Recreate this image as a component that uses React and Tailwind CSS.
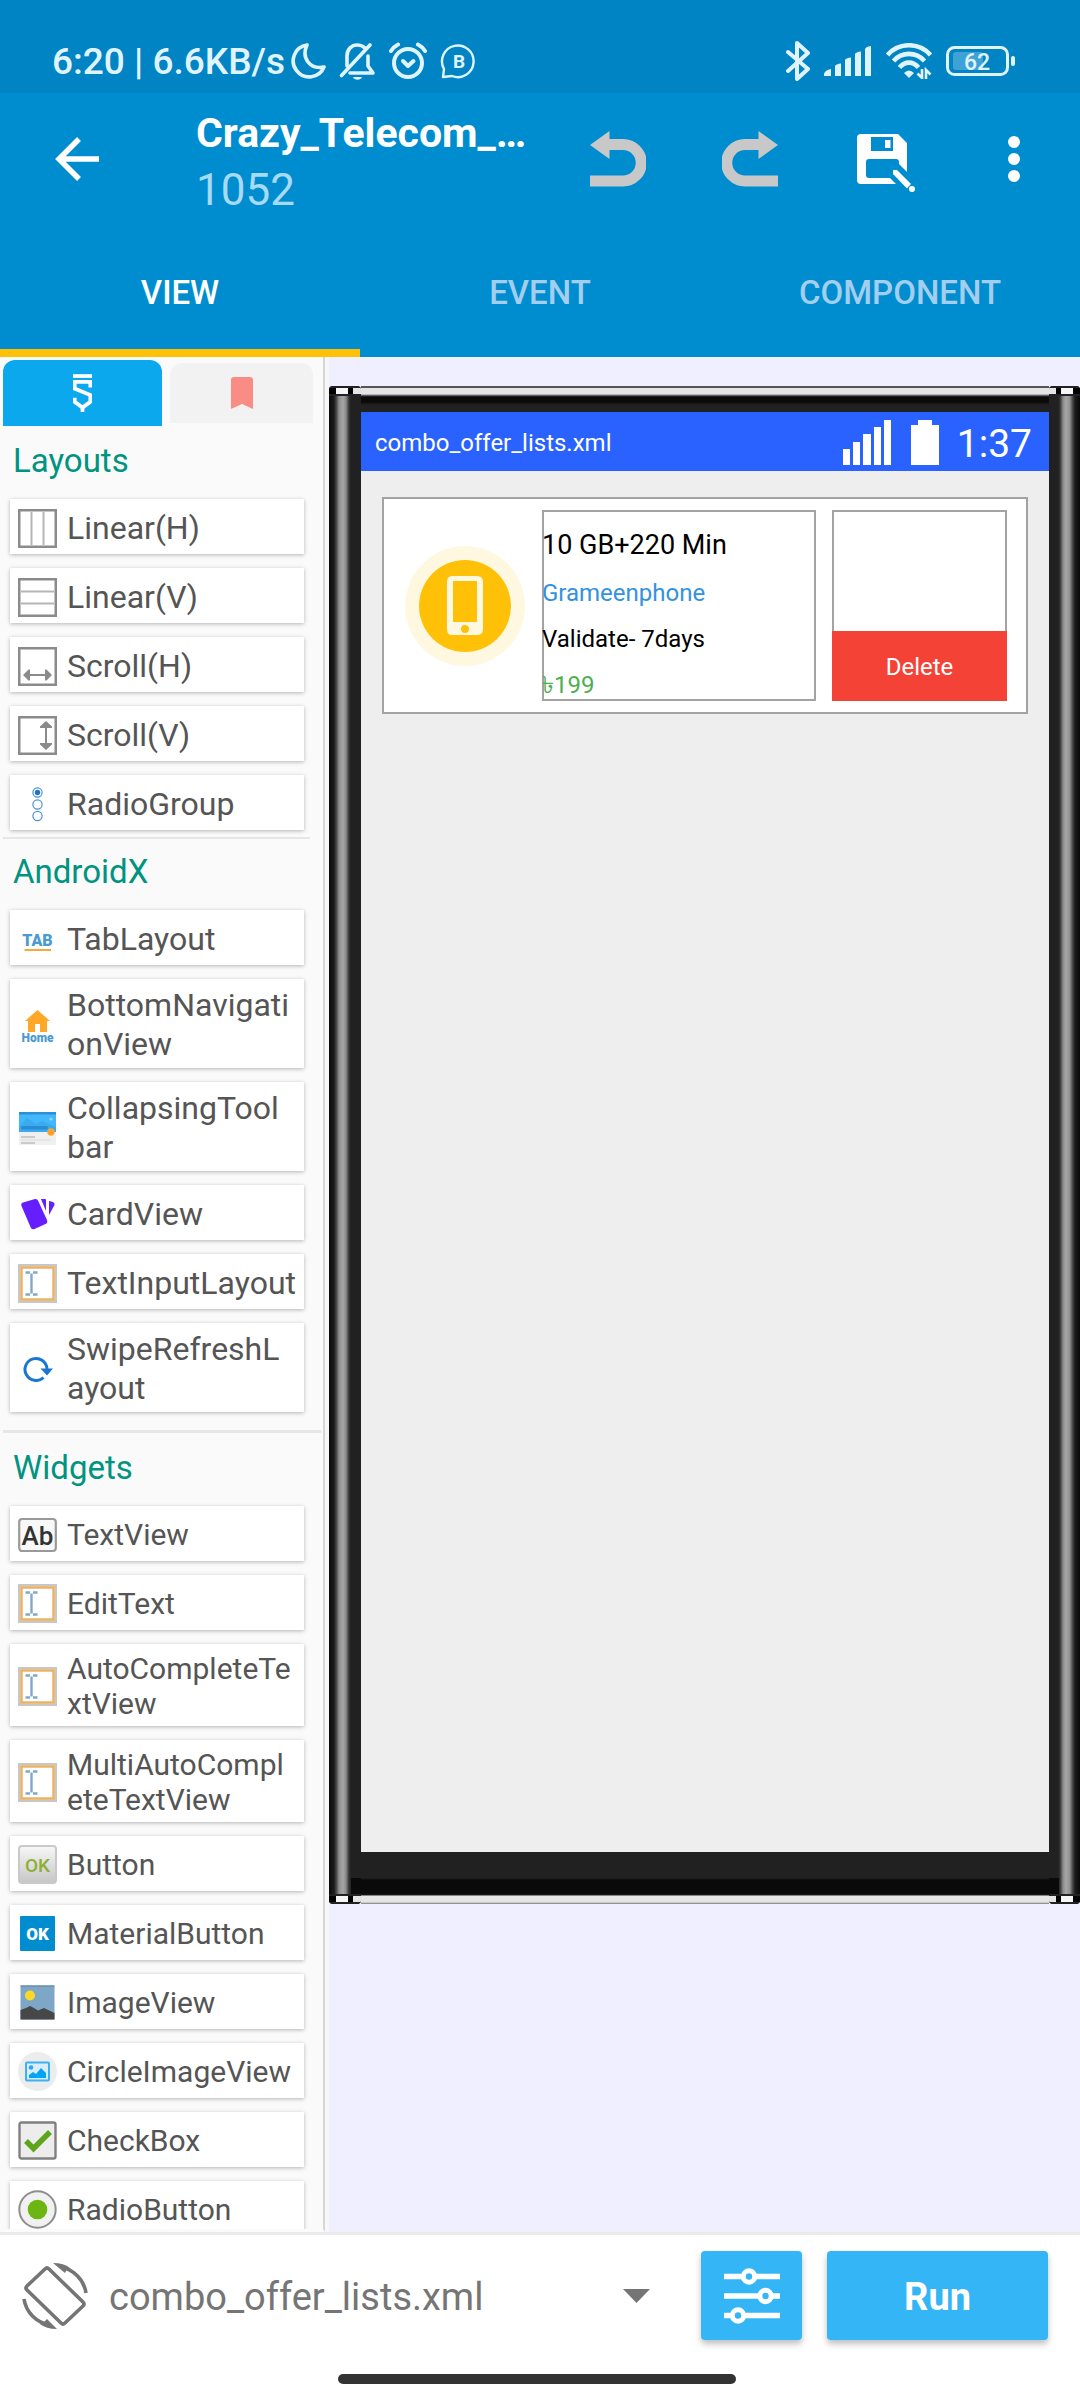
import React, { useState } from 'react';

/* ---------- status bar icons ---------- */

function MoonIcon() {
  return (
    <svg viewBox="0 0 38 38" className="w-[38px] h-[38px]" fill="none" stroke="currentColor" strokeWidth="3.6" strokeLinejoin="round">
      <path d="M18 3 A16 16 0 1 0 35 25 C21 28 12 16 18 3 Z" />
    </svg>
  );
}

function BellOffIcon() {
  return (
    <svg viewBox="0 0 38 38" className="w-[38px] h-[38px]" fill="none" stroke="currentColor" strokeWidth="3.6" strokeLinecap="round" strokeLinejoin="round">
      <path d="M2.5 33.500 L31 3" />
      <path d="M8 24 V14 C8 7 13 3 18 3 C21 3 24 4 26 6" />
      <path d="M29 14 V24 L34 31 H11" />
      <path d="M14 35 H23 C22 38.500 15 38.500 14 35 Z" fill="currentColor" stroke="none" />
    </svg>
  );
}

function AlarmIcon() {
  return (
    <svg viewBox="0 0 38 38" className="w-[38px] h-[38px]" fill="none" stroke="currentColor" strokeWidth="4" strokeLinecap="round" strokeLinejoin="round">
      <circle cx="19" cy="21" r="14" />
      <path d="M14 19 L19 24 L24.500 19" />
      <path d="M2 9 C4 6 6 4 9 2.500 M36 9 C34 6 32 4 29 2.500" />
    </svg>
  );
}

function BubbleIcon() {
  return (
    <svg viewBox="0 0 38 38" className="w-[38px] h-[38px]" fill="none" stroke="currentColor" strokeWidth="2.4" strokeLinejoin="round">
      <path d="M4 35 L5 27 A15.800 15.800 0 1 1 13 34 Z" />
      <text x="20" y="26" textAnchor="middle" fontSize="19" fontWeight="700" fill="currentColor" stroke="none">B</text>
    </svg>
  );
}

function BluetoothIcon() {
  return (
    <svg viewBox="0 0 24 40" className="w-6 h-10" fill="none" stroke="currentColor" strokeWidth="4" strokeLinecap="round" strokeLinejoin="round">
      <path d="M2 11 L22 28 L11 38 V2 L22 12 L2 30" />
    </svg>
  );
}

function SignalIcon() {
  return (
    <svg viewBox="0 0 48 32" className="w-12 h-8" fill="currentColor">
      <path d="M0 31 V29 Q1 25 7 24 V31 Z" />
      <path d="M11 31 V21 Q12 19 17 18.500 V31 Z" />
      <path d="M21 31 V15 Q22 13 27 12.500 V31 Z" />
      <path d="M31 31 V9 Q32 7 37 6.500 V31 Z" />
      <path d="M41 31 V4 Q42 1.500 47 1 V31 Z" />
    </svg>
  );
}

function WifiIcon() {
  return (
    <svg viewBox="0 0 46 36" className="w-[46px] h-9" fill="none" stroke="currentColor" strokeWidth="4.600">
      <path d="M1.500 12 C13 -1 33 -1 44.500 12" />
      <path d="M7.500 18 C16 8.500 30 8.500 38.500 18" />
      <path d="M13.500 24.500 C19 18 27 18 32.500 24.500" />
      <path d="M18 30 Q23 25 28 30 L23 35 Z" fill="currentColor" stroke="none" />
      <path d="M36 26 V35 L31.500 30.500 M40 36 V27 L44.500 31.500" strokeWidth="2.600" />
    </svg>
  );
}

function BatteryIcon() {
  return (
    <svg viewBox="0 0 69 30" className="w-[69px] h-[30px]">
      <rect x="1.500" y="1.500" width="60" height="27" rx="7" fill="none" stroke="currentColor" strokeWidth="3" />
      <rect x="7" y="6" width="30" height="18" rx="3" fill="#3FA2D6" />
      <rect x="65" y="10" width="4" height="10" rx="2" fill="currentColor" />
      <text x="31" y="23.500" textAnchor="middle" fontSize="23" fontWeight="500" fill="currentColor">62</text>
    </svg>
  );
}

/* ---------- toolbar icons ---------- */

function BackIcon() {
  return (
    <svg viewBox="0 0 44 44" className="w-11 h-11" fill="none" stroke="#fff" strokeWidth="5.500">
      <path d="M44 22 H4 M24 2 L4 22 L24 42" />
    </svg>
  );
}

function UndoIcon() {
  return (
    <svg viewBox="0 0 56 56" className="w-14 h-14">
      <path d="M17 13.500 H33 A18 18 0 0 1 33 50 H0" fill="none" stroke="#C8C8C8" strokeWidth="11" />
      <path d="M0 14 L19.500 0 V28 Z" fill="#C8C8C8" />
    </svg>
  );
}

function RedoIcon() {
  return (
    <svg viewBox="0 0 56 56" className="w-14 h-14">
      <path d="M39 13.500 H23 A18 18 0 0 0 23 50 H56" fill="none" stroke="#C8C8C8" strokeWidth="11" />
      <path d="M56 14 L36.500 0 V28 Z" fill="#C8C8C8" />
    </svg>
  );
}

function SaveIcon() {
  return (
    <svg viewBox="0 0 58 58" className="w-[58px] h-[58px]">
      <path d="M4 0 H41 L50 9 V38 L42 30 V28 Q42 25 39 25 H12 Q9 25 9 28 V41 Q9 44 12 44 H33 L39 50 H4 Q0 50 0 46 V4 Q0 0 4 0 Z M14 3 V17 H36 V3 Z M28 6 H33.500 V14 H28 Z" fill="#fff" fillRule="evenodd" />
      <path d="M36 36 H40 L54 50 L50 54.500 L36 40 Z" fill="#fff" />
      <circle cx="55" cy="55" r="3" fill="#fff" />
    </svg>
  );
}

function MoreIcon() {
  return (
    <svg viewBox="0 0 12 46" className="w-3 h-[46px]" fill="#fff">
      <circle cx="6" cy="6" r="6" />
      <circle cx="6" cy="23" r="6" />
      <circle cx="6" cy="40" r="6" />
    </svg>
  );
}

/* ---------- palette icons, all on a 39px grid ---------- */

function Glyph({ children }) {
  return (
    <svg viewBox="0 0 39 39" className="w-[39px] h-[39px] shrink-0">
      {children}
    </svg>
  );
}

const frame = <rect x="1.250" y="1.250" width="36.500" height="36.500" fill="#fff" stroke="#8B8B8B" strokeWidth="2.500" />;

const textField = (
  <Glyph>
    <rect x="1.250" y="1.250" width="36.500" height="36.500" fill="#fff" stroke="#C9C7C3" strokeWidth="2.500" />
    <rect x="3.500" y="3.500" width="32" height="32" fill="none" stroke="#EBB060" strokeWidth="2.400" />
    <path d="M7.500 8.500 H12 M15 8.500 H19.500 M13.500 9.500 V29.500 M7.500 30.500 H12 M15 30.500 H19.500" stroke="#7FA8C9" strokeWidth="2.400" />
  </Glyph>
);

const icons = {
  linearH: (
    <Glyph>
      {frame}
      <path d="M13.500 3 V36 M25.500 3 V36" stroke="#B5B5B5" strokeWidth="2" />
    </Glyph>
  ),
  linearV: (
    <Glyph>
      {frame}
      <path d="M3 13.500 H36 M3 25.500 H36" stroke="#B5B5B5" strokeWidth="2" />
    </Glyph>
  ),
  scrollH: (
    <Glyph>
      {frame}
      <path d="M8 28 H31" stroke="#8B8B8B" strokeWidth="2" />
      <path d="M5 28 L10.500 22.500 H12 V33.500 H10.500 Z M34 28 L28.500 22.500 H27 V33.500 H28.500 Z" fill="#8B8B8B" />
    </Glyph>
  ),
  scrollV: (
    <Glyph>
      {frame}
      <path d="M28 8 V31" stroke="#8B8B8B" strokeWidth="2" />
      <path d="M28 5 L22 10.500 V12 H34 V10.500 Z M28 34 L22 28.500 V27 H34 V28.500 Z" fill="#8B8B8B" />
    </Glyph>
  ),
  radioGroup: (
    <Glyph>
      <g fill="none" stroke="#4A90D9" strokeWidth="1.200">
        <circle cx="19.500" cy="7.500" r="4.600" />
        <circle cx="19.500" cy="19.500" r="4.600" />
        <circle cx="19.500" cy="31" r="4.600" />
      </g>
      <circle cx="19.500" cy="7.500" r="2.700" fill="#1F73D0" />
    </Glyph>
  ),
  tab: (
    <Glyph>
      <text x="19.500" y="25.500" textAnchor="middle" fontSize="16" fontWeight="900" fill="#4A9AD4">TAB</text>
      <path d="M6.500 30 H33" stroke="#F5A93B" strokeWidth="2" />
    </Glyph>
  ),
  home: (
    <Glyph>
      <path d="M19.500 4 L32 15 H29 V26 H22 V18 H17 V26 H10 V15 H7 Z" fill="#FFA726" />
      <text x="19.500" y="36" textAnchor="middle" fontSize="12" fontWeight="900" fill="#4A9AD4">Home</text>
    </Glyph>
  ),
  collapsing: (
    <Glyph>
      <rect x="1" y="23" width="37" height="13" fill="#F0F0F0" />
      <rect x="1" y="3" width="37" height="20" fill="#42B7FB" />
      <rect x="1" y="3" width="37" height="2.500" fill="#2D8FD6" />
      <path d="M1 18 L9 9 L18 15 L24 12 L38 18 V23 H1 Z" fill="#3AABEF" />
      <rect x="3" y="17" width="27" height="3.500" rx="1.500" fill="#2B8CD4" />
      <circle cx="33" cy="10" r="1.600" fill="#8FD3FB" />
      <circle cx="33" cy="23" r="3.700" fill="#FFA229" />
      <path d="M3 28 H17 M3 34 H17" stroke="#BDBDBD" strokeWidth="1.400" />
      <path d="M3 31 H33" stroke="#DDDDDD" strokeWidth="1.200" />
    </Glyph>
  ),
  card: (
    <Glyph>
      <path d="M5 7.500 L17 4 Q19 3.500 20 5.500 L29 25 Q30 28 27.500 29 L16.500 34 Q13.500 35 12.500 32 L3.500 11 Q2.500 8.500 5 7.500 Z" fill="#651FFF" />
      <path d="M23 4 H27 Q28 4 28 5 V16 Z M31 6 L35 7 Q37 8 36.500 10 L31 20 Z" fill="#651FFF" />
    </Glyph>
  ),
  textField,
  refresh: (
    <Glyph>
      <path d="M25.500 27.500 A11 11 0 1 1 29 19" fill="none" stroke="#1976D2" strokeWidth="3" />
      <path d="M22.500 18.500 H35 L29 25.500 Z" fill="#1976D2" />
    </Glyph>
  ),
  ab: (
    <Glyph>
      <rect x="1.200" y="4" width="36.600" height="32" rx="3" fill="#F8F8F8" stroke="#9A9A9A" strokeWidth="2.200" />
      <text x="19.500" y="29.500" textAnchor="middle" fontSize="26" fontWeight="500" fill="#333">Ab</text>
    </Glyph>
  ),
  button: (
    <Glyph>
      <defs>
        <linearGradient id="btn" x1="0" y1="0" x2="0" y2="1">
          <stop offset="0" stopColor="#F7F7F7" />
          <stop offset="1" stopColor="#C6C6C6" />
        </linearGradient>
      </defs>
      <rect x="1" y="1" width="37" height="37" rx="3" fill="url(#btn)" stroke="#C9C9C9" strokeWidth="2" />
      <text x="19.500" y="26.500" textAnchor="middle" fontSize="19" fontWeight="500" fill="#8FAE35">OK</text>
    </Glyph>
  ),
  materialButton: (
    <Glyph>
      <rect x="2" y="2" width="35" height="35" rx="1" fill="#008DCF" />
      <text x="19.500" y="25.500" textAnchor="middle" fontSize="17" fontWeight="900" fill="#fff">OK</text>
    </Glyph>
  ),
  image: (
    <Glyph>
      <rect x="2.500" y="2.500" width="34" height="34" fill="#7EA6C6" />
      <path d="M2.500 3 H36.500" stroke="#5E7F99" strokeWidth="1" />
      <circle cx="12" cy="12.500" r="5" fill="#FDD926" />
      <path d="M2.500 36.500 V27 L8 25 L12 23 L16 25 L20 27.500 L26 25 L36.500 30 V36.500 Z" fill="#474747" />
    </Glyph>
  ),
  circleImage: (
    <Glyph>
      <circle cx="19.500" cy="19.500" r="19.500" fill="#ECECEC" />
      <rect x="8" y="10.500" width="23" height="18" rx="1" fill="#D9EEFA" stroke="#3DB0F2" strokeWidth="2" />
      <circle cx="13" cy="15.500" r="2.300" fill="#2FA8EF" />
      <path d="M11 26 V23 L15 20 L18 22 L23 16 L28 21 V26 Z" fill="#03A4F5" />
    </Glyph>
  ),
  checkbox: (
    <Glyph>
      <rect x="1.500" y="1.500" width="36" height="36" rx="2" fill="#EDEDED" stroke="#808080" strokeWidth="2.400" />
      <path d="M8 20 L15.500 27.500 L32 11" fill="none" stroke="#5FA51B" strokeWidth="5.500" />
    </Glyph>
  ),
  radio: (
    <Glyph>
      <circle cx="19.500" cy="19.500" r="18.200" fill="#F1F1F1" stroke="#8D8D8D" strokeWidth="2" />
      <circle cx="19.500" cy="19.500" r="9.800" fill="#6CB512" />
    </Glyph>
  ),
};

const layouts = [
  { icon: 'linearH', label: 'Linear(H)' },
  { icon: 'linearV', label: 'Linear(V)' },
  { icon: 'scrollH', label: 'Scroll(H)' },
  { icon: 'scrollV', label: 'Scroll(V)' },
  { icon: 'radioGroup', label: 'RadioGroup' },
];

// long class names carry their own line break
const androidx = [
  { icon: 'tab', label: 'TabLayout' },
  { icon: 'home', label: 'BottomNavigati\nonView' },
  { icon: 'collapsing', label: 'CollapsingTool\nbar' },
  { icon: 'card', label: 'CardView' },
  { icon: 'textField', label: 'TextInputLayout' },
  { icon: 'refresh', label: 'SwipeRefreshL\nayout' },
];

const widgets = [
  { icon: 'ab', label: 'TextView' },
  { icon: 'textField', label: 'EditText' },
  { icon: 'textField', label: 'AutoCompleteTe\nxtView' },
  { icon: 'textField', label: 'MultiAutoCompl\neteTextView' },
  { icon: 'button', label: 'Button' },
  { icon: 'materialButton', label: 'MaterialButton' },
  { icon: 'image', label: 'ImageView' },
  { icon: 'circleImage', label: 'CircleImageView' },
  { icon: 'checkbox', label: 'CheckBox' },
  { icon: 'radio', label: 'RadioButton' },
];

function StatusBar() {
  return (
    <div className="h-[93px] pt-7 pl-[52px] pr-[65px] flex items-center justify-between bg-[#0084C3] text-[#E0F4FF]">
      <div className="flex items-center gap-3">
        <span className="text-[37px] leading-[42px] pt-0.5 font-medium whitespace-nowrap -mr-2">6:20 | 6.6KB/s</span>
        <MoonIcon />
        <BellOffIcon />
        <AlarmIcon />
        <BubbleIcon />
      </div>
      <div className="flex items-center gap-3.5">
        <BluetoothIcon />
        <SignalIcon />
        <WifiIcon />
        <BatteryIcon />
      </div>
    </div>
  );
}

function Toolbar() {
  return (
    <div className="h-[132px] flex items-center">
      <button aria-label="Back" className="w-[154px] h-full flex items-center justify-center"><BackIcon /></button>
      <div className="flex-1 min-w-0 pl-[42px] pt-2">
        <h1 className="text-[41px] leading-[54px] font-bold text-white truncate">Crazy_Telecom_…</h1>
        <p className="text-[44px] leading-[60px] text-[#A6DAF5]">1052</p>
      </div>
      <button aria-label="Undo" className="w-[132px] h-full flex items-center justify-center"><UndoIcon /></button>
      <button aria-label="Redo" className="w-[132px] h-full flex items-center justify-center"><RedoIcon /></button>
      <button aria-label="Save" className="w-[132px] h-full flex items-center justify-center pl-2 pt-2"><SaveIcon /></button>
      <button aria-label="More options" className="w-[132px] h-full flex items-center justify-center"><MoreIcon /></button>
    </div>
  );
}

function Tabs({ active, onChange }) {
  return (
    <div className="h-[132px] grid grid-cols-3">
      {['VIEW', 'EVENT', 'COMPONENT'].map((tab) => (
        <button
          key={tab}
          onClick={() => onChange(tab)}
          className={`pt-[3px] border-y-8 border-t-transparent text-[33px] leading-[39px] font-medium ${active === tab ? 'border-b-[#FFC107] text-white' : 'border-b-transparent text-[#A3CEEE]'}`}
        >
          {tab}
        </button>
      ))}
    </div>
  );
}

function Section({ title, items, small }) {
  return (
    <section>
      <h2 className="px-[13px] pb-2.5 h-[67px] flex items-center text-[33px] leading-[38px] text-[#009380]">{title}</h2>
      <div className="flex flex-col gap-3.5 pl-2.5 pr-[19px]">
        {items.map((item) => (
          <button
            key={item.label}
            className={`min-h-[55px] pl-2 flex items-center gap-[10px] bg-white text-left text-[#555] shadow-[0_1px_4px_rgba(0,0,0,0.28)] ${small ? 'text-[30px] leading-[35px] pt-[7px] pb-[5px]' : 'text-[32px] leading-[39px] pt-[7px] pb-1'}`}
          >
            {icons[item.icon]}
            <span className="min-w-0 flex-1 whitespace-pre-line">{item.label}</span>
          </button>
        ))}
      </div>
    </section>
  );
}

function Palette() {
  return (
    <aside className="w-[325px] shrink-0 bg-[#FAFAFA] border-r-2 border-r-[#D6D6D6] border-b-[3px] border-b-[#FAFAFA] overflow-hidden">
      <div className="flex items-center gap-2 pt-[3px] pl-[3px] pr-[10px]">
        <button aria-label="Widgets" className="w-[159px] h-[66px] rounded-t-xl bg-[#0BA8EE] flex items-center justify-center">
          <svg viewBox="0 0 56 112" className="w-[19px] h-[38px]" fill="none" stroke="#fff" strokeWidth="11">
            <path d="M0 6 H56" />
            <path d="M51 40 V23 H5 V43 L51 62 V82 L28 99 L5 82 V70" />
            <path d="M28 96 V112" />
          </svg>
        </button>
        <button aria-label="Favorites" className="flex-1 h-[60px] rounded-t-xl bg-[#F2F2F2] flex items-center justify-center">
          <svg viewBox="0 0 22 32" className="w-[22px] h-8">
            <path d="M3 0 H19 Q22 0 22 3 V32 L11 27 L0 32 V3 Q0 0 3 0 Z" fill="#F98D86" />
          </svg>
        </button>
      </div>
      <div className="pt-1.5">
        <Section title="Layouts" items={layouts} />
      </div>
      <div className="mt-[7px] ml-[3px] mr-[13px] h-0.5 bg-[#E6E6E6]" />
      <div className="pt-1">
        <Section title="AndroidX" items={androidx} />
      </div>
      <div className="mt-[18px] ml-[3px] mr-0.5 h-[3px] bg-[#E6E6E6]" />
      <div className="pt-1.5">
        <Section title="Widgets" items={widgets} small />
      </div>
    </aside>
  );
}

function DeviceStatusBar() {
  return (
    <div className="h-[59px] pl-3.5 pr-[17px] flex items-center bg-[#2962FF] text-white">
      <span className="flex-1 text-[24px] leading-7 pt-[3px]">combo_offer_lists.xml</span>
      <svg viewBox="0 0 48 46" className="w-12 h-[46px] mr-5" fill="#fff">
        <path d="M0 30 H7 V46 H0 Z M10 23 H17 V46 H10 Z M20 15 H28 V46 H20 Z M31 8 H38 V46 H31 Z M41 1 H48 V46 H41 Z" />
      </svg>
      <svg viewBox="0 0 28 46" className="w-7 h-[46px] mr-[18px]" fill="#fff">
        <path d="M0 6 H7 V1 H21 V6 H28 V46 H0 Z" />
      </svg>
      <span className="text-[39px] leading-[44px] pt-1">1:37</span>
    </div>
  );
}

function OfferCard() {
  return (
    <div className="mx-[21px] mt-[26px] h-[217px] border-2 border-[#A3A3A3] bg-white flex p-[11px] pr-[19px]">
      <div className="w-[147px] flex items-center justify-center pr-2">
        <svg viewBox="0 0 120 120" className="w-[120px] h-[120px]">
          <circle cx="60" cy="60" r="60" fill="#FFF8E1" />
          <circle cx="60" cy="60" r="46" fill="#FFC107" />
          <path d="M47 30 H72 Q78 30 78 36 V83 Q78 89 72 89 H47 Q42 89 42 83 V36 Q42 30 47 30 Z M48 35 V76 H72 V35 Z M60 79 A4 4 0 1 0 60 87 A4 4 0 1 0 60 79 Z" fill="#FFF8E1" fillRule="evenodd" />
        </svg>
      </div>
      <div className="flex-1 min-w-0 border-2 border-[#A3A3A3]">
        <div className="-ml-0.5 flex flex-col text-[24px] leading-[46px] whitespace-nowrap">
          <p className="text-[27px] leading-[50px] pt-2 text-black">10 GB+220 Min</p>
          <p className="text-[#3392E0]">Grameenphone</p>
          <p className="text-black">Validate- 7days</p>
          <p className="h-9 text-[#4CAF50]">৳199</p>
        </div>
      </div>
      <div className="w-[175px] ml-4 border-2 border-b-0 border-[#A3A3A3] flex flex-col justify-end">
        <button className="-mx-0.5 h-[70px] pt-0.5 bg-[#F44336] text-white text-[24px] leading-7">Delete</button>
      </div>
    </div>
  );
}

function RailEnd({ side }) {
  return (
    <div className={`h-[10px] py-0.5 bg-[#222] flex ${side === 'left' ? '' : 'flex-row-reverse'}`}>
      <div className="w-[7px] bg-black" />
      <div className="w-3 bg-[#F6F6F6]" />
      <div className="w-[5px] bg-black" />
      <div className="flex-1 bg-[#E4E4E4]" />
    </div>
  );
}

function Rail({ side }) {
  return (
    <div className={`shrink-0 flex flex-col rounded-sm overflow-hidden ${side === 'left' ? 'w-8 bg-[linear-gradient(to_right,#0a0a0a_0px,#1b1b1b_5px,#555_8px,#8e8e8e_10px,#a6a6a6_14px,#8a8a8a_17px,#333_20px,#212121_22px)]' : 'w-[31px] bg-[linear-gradient(to_left,#0a0a0a_0px,#1b1b1b_5px,#555_8px,#8e8e8e_10px,#a6a6a6_14px,#8a8a8a_17px,#333_20px,#212121_22px)]'}`}>
      <RailEnd side={side} />
      <div className="flex-1" />
      <div className={`w-2.5 h-4 bg-[#0a0a0a] ${side === 'left' ? 'self-end' : 'self-start'}`} />
      <RailEnd side={side} />
    </div>
  );
}

function Device() {
  return (
    <div className="flex">
      <Rail side="left" />
      <div className="flex-1 min-w-0 bg-[#212121]">
        <div className="h-[26px] bg-[linear-gradient(to_bottom,#555_0px,#555_2px,#e4e4e4_2px,#e4e4e4_8px,#333_10px,#0a0a0a_11px,#0a0a0a_16px,#212121_19px)]" />
        <div className="aspect-[688/1440] bg-[#EEEEEE]">
          <DeviceStatusBar />
          <OfferCard />
        </div>
        <div className="h-[52px] bg-[linear-gradient(to_bottom,#212121_26px,#0a0a0a_28px,#0a0a0a_42px,#222_43px,#e8e8e8_44px,#e4e4e4_50px,#777_52px)]" />
      </div>
      <Rail side="right" />
    </div>
  );
}

function BottomBar() {
  return (
    <footer className="bg-white border-t-[3px] border-[#EBEBEB]">
      <div className="pt-4 pl-[22px] pr-8 flex items-center">
        <button aria-label="Rotate" className="shrink-0">
          <svg viewBox="0 0 66 66" className="w-[66px] h-[66px]" fill="none" stroke="#757575">
            <path d="M27 6 Q25 4 23 6 L5 23 Q3 25 5 27 L39 60 Q41 62 43 60 L61 43 Q63 41 61 39 Z" strokeWidth="3.600" />
            <path d="M38 4 A31 31 0 0 1 64 30 M28 62 A31 31 0 0 1 2 36" strokeWidth="3.600" />
            <path d="M31 0 Q42 0 48 5 L45 6 L43 10 Z M35 66 Q24 66 18 61 L21 60 L25 56 Z" fill="#757575" stroke="none" />
          </svg>
        </button>
        <div className="flex-1 min-w-0 ml-[21px] flex items-center">
          <select aria-label="File" className="appearance-none flex-1 min-w-0 pt-0.5 bg-transparent text-[38px] leading-[46px] text-[#757575]">
            <option>combo_offer_lists.xml</option>
          </select>
          <svg viewBox="0 0 27 14" className="w-[27px] h-3.5 mr-[51px] shrink-0">
            <path d="M0 0 H27 L13.500 14 Z" fill="#757575" />
          </svg>
        </div>
        <button aria-label="Settings" className="w-[101px] h-[89px] shrink-0 rounded bg-[#34B5F5] shadow-[0_4px_6px_rgba(0,0,0,0.25)] flex items-center justify-center">
          <svg viewBox="0 0 56 56" className="w-14 h-14" fill="none" stroke="#fff">
            <path d="M0 8.500 H18 M31 8.500 H56 M0 28 H35 M48 28 H56 M0 47.500 H8 M20 47.500 H56" strokeWidth="5.500" />
            <circle cx="25" cy="8.500" r="5.700" strokeWidth="5" />
            <circle cx="41.500" cy="28" r="5.700" strokeWidth="5" />
            <circle cx="14" cy="47.500" r="5.700" strokeWidth="5" />
          </svg>
        </button>
        <button className="ml-[25px] w-[221px] h-[89px] pt-0.5 shrink-0 rounded bg-[#34B5F5] text-white text-[38px] leading-[46px] font-bold shadow-[0_4px_6px_rgba(0,0,0,0.25)]">Run</button>
      </div>
      <div className="pt-[34px] pb-4 pr-1.5 flex justify-center">
        <div className="w-[398px] h-2.5 rounded-full bg-[#333]" />
      </div>
    </footer>
  );
}

export default function App() {
  const [tab, setTab] = useState('VIEW');

  return (
    <div className="h-screen flex flex-col overflow-hidden bg-white font-[family-name:Roboto,sans-serif]">
      <header className="bg-[#008DCF]">
        <StatusBar />
        <Toolbar />
        <Tabs active={tab} onChange={setTab} />
      </header>
      <main className="flex-1 min-h-0 flex">
        <Palette />
        <div className="w-1 shrink-0 bg-[#F7F7F7]" />
        <div className="flex-1 min-w-0 bg-[#F0EFFF] pt-[29px]">
          <Device />
        </div>
      </main>
      <BottomBar />
    </div>
  );
}
